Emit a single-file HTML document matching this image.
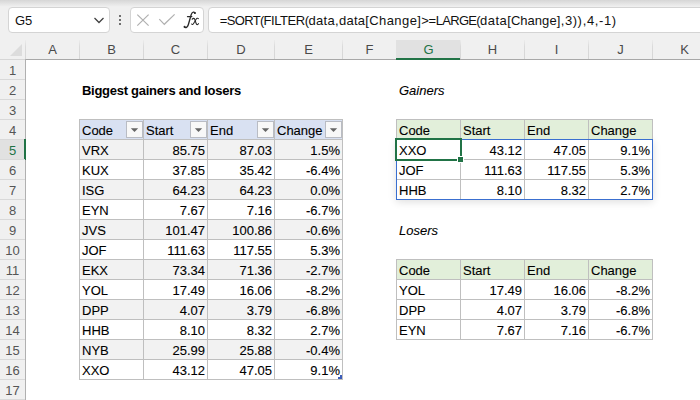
<!DOCTYPE html><html><head><meta charset="utf-8"><style>
*{box-sizing:border-box;margin:0;padding:0}
html,body{width:700px;height:400px;overflow:hidden;background:#fff}
body{position:relative;font-family:"Liberation Sans",sans-serif;font-size:13px;color:#000}
.a{position:absolute}
.t{position:absolute;white-space:nowrap;line-height:20px;height:20px}
.r{text-align:right}
.c{text-align:center}
.k{-webkit-text-stroke:0.1px #000}
</style></head><body>

<div class="a" style="left:0;top:0;width:700px;height:59px;background:#f0f0f0"></div>
<div class="a" style="left:0;top:0;width:700px;height:7px;background:linear-gradient(#d6d6d6,#f1f1f1)"></div>
<div class="a" style="left:8px;top:7px;width:102px;height:26px;background:#fff;border:1px solid #d4d4d4;border-radius:4px"></div>
<div class="t" style="left:15px;top:11px;font-size:13px;color:#111">G5</div>
<svg class="a" style="left:90px;top:14px" width="18" height="12"><path d="M4.5 4 L9 8.5 L13.5 4" fill="none" stroke="#404040" stroke-width="1.25"/></svg>
<div class="a" style="left:119px;top:15px;width:2px;height:2px;background:#707070"></div>
<div class="a" style="left:119px;top:19px;width:2px;height:2px;background:#707070"></div>
<div class="a" style="left:119px;top:23px;width:2px;height:2px;background:#707070"></div>
<div class="a" style="left:130px;top:7px;width:74px;height:26px;background:#fff;border:1px solid #d4d4d4;border-radius:4px"></div>
<svg class="a" style="left:134px;top:11px" width="70" height="20"><path d="M3.3 3.6 L14.6 14.6 M14.6 3.6 L3.3 14.6" stroke="#b0b0b0" stroke-width="1.2" fill="none"/><path d="M25.3 8.2 L30.3 13.3 L40.6 3.4" stroke="#b0b0b0" stroke-width="1.2" fill="none"/></svg>
<svg class="a" style="left:180px;top:8px" width="22" height="24"><g fill="none" stroke="#2a2a2a" stroke-linecap="round"><path d="M15 5.2 C14.6 3.6 12.2 3.6 11.2 6.6 L8.3 16.8 C7.6 19.4 5.6 20.2 4.4 19.0" stroke-width="1.35"/><path d="M7.4 8.6 L11.9 8.6" stroke-width="1.1"/><path d="M12.2 11.2 C13.1 9.9 14.4 10.0 14.9 11.6 L16.1 15.4 C16.6 16.9 17.7 16.9 18.5 15.7" stroke-width="1.15"/><path d="M18.4 10.6 C17.6 9.9 16.7 10.3 16.0 11.5 L13.9 15.1 C13.1 16.6 12.2 16.8 11.6 16.0" stroke-width="1.05"/></g><circle cx="14.9" cy="5" r="1" fill="#2a2a2a"/><circle cx="4.6" cy="18.8" r="1" fill="#2a2a2a"/></svg>
<div class="a" style="left:208px;top:7px;width:520px;height:26px;background:#fff;border:1px solid #d4d4d4;border-radius:4px"></div>
<div class="t" style="left:219.80px;top:10.5px;font-size:13px;letter-spacing:-0.666px;color:#111">=SORT(</div>
<div class="t" style="left:263.60px;top:10.5px;font-size:13px;letter-spacing:-0.449px;color:#111">FILTER(</div>
<div class="t" style="left:308.60px;top:10.5px;font-size:13px;letter-spacing:0.274px;color:#111">data,data</div>
<div class="t" style="left:365.30px;top:10.5px;font-size:13px;letter-spacing:0.402px;color:#111">[Change]</div>
<div class="t" style="left:421.30px;top:10.5px;font-size:13px;letter-spacing:-0.394px;color:#111">&gt;=</div>
<div class="t" style="left:435.70px;top:10.5px;font-size:13px;letter-spacing:-0.684px;color:#111">LARGE(</div>
<div class="t" style="left:480.00px;top:10.5px;font-size:13px;letter-spacing:0.497px;color:#111">data</div>
<div class="t" style="left:507.30px;top:10.5px;font-size:13px;letter-spacing:0.027px;color:#111">[Change]</div>
<div class="t" style="left:560.80px;top:10.5px;font-size:13px;letter-spacing:0.500px;color:#111">,3))</div>
<div class="t" style="left:582.80px;top:10.5px;font-size:13px;letter-spacing:0.609px;color:#111">,4,-1)</div>
<div class="a" style="left:25px;top:59px;width:675px;height:1px;background:#a8a8a8"></div>
<div class="a" style="left:0;top:59px;width:25px;height:1px;background:#d6d6d6"></div>
<svg class="a" style="left:0;top:40px" width="25" height="19"><path d="M22 4 L22 16 L10 16 Z" fill="#dcdcdc"/></svg>
<div class="t c" style="left:26px;top:40px;width:53px;line-height:20px;color:#4a4a4a">A</div>
<div class="a" style="left:79px;top:40px;width:1px;height:19px;background:linear-gradient(#ececec,#dadada 35%,#d6d6d6)"></div>
<div class="t c" style="left:80px;top:40px;width:63px;line-height:20px;color:#4a4a4a">B</div>
<div class="a" style="left:143px;top:40px;width:1px;height:19px;background:linear-gradient(#ececec,#dadada 35%,#d6d6d6)"></div>
<div class="t c" style="left:144px;top:40px;width:63px;line-height:20px;color:#4a4a4a">C</div>
<div class="a" style="left:207px;top:40px;width:1px;height:19px;background:linear-gradient(#ececec,#dadada 35%,#d6d6d6)"></div>
<div class="t c" style="left:208px;top:40px;width:66px;line-height:20px;color:#4a4a4a">D</div>
<div class="a" style="left:274px;top:40px;width:1px;height:19px;background:linear-gradient(#ececec,#dadada 35%,#d6d6d6)"></div>
<div class="t c" style="left:275px;top:40px;width:67px;line-height:20px;color:#4a4a4a">E</div>
<div class="a" style="left:342px;top:40px;width:1px;height:19px;background:linear-gradient(#ececec,#dadada 35%,#d6d6d6)"></div>
<div class="t c" style="left:343px;top:40px;width:53px;line-height:20px;color:#4a4a4a">F</div>
<div class="a" style="left:396px;top:40px;width:1px;height:19px;background:linear-gradient(#ececec,#dadada 35%,#d6d6d6)"></div>
<div class="a" style="left:396px;top:40px;width:64px;height:19px;background:#e1e1e1"></div>
<div class="a" style="left:396px;top:58px;width:64px;height:2px;background:#217346;z-index:2"></div>
<div class="t c" style="left:397px;top:40px;width:63px;line-height:20px;color:#217346">G</div>
<div class="a" style="left:460px;top:40px;width:1px;height:19px;background:linear-gradient(#ececec,#dadada 35%,#d6d6d6)"></div>
<div class="t c" style="left:461px;top:40px;width:63px;line-height:20px;color:#4a4a4a">H</div>
<div class="a" style="left:524px;top:40px;width:1px;height:19px;background:linear-gradient(#ececec,#dadada 35%,#d6d6d6)"></div>
<div class="t c" style="left:525px;top:40px;width:63px;line-height:20px;color:#4a4a4a">I</div>
<div class="a" style="left:588px;top:40px;width:1px;height:19px;background:linear-gradient(#ececec,#dadada 35%,#d6d6d6)"></div>
<div class="t c" style="left:589px;top:40px;width:63px;line-height:20px;color:#4a4a4a">J</div>
<div class="a" style="left:652px;top:40px;width:1px;height:19px;background:linear-gradient(#ececec,#dadada 35%,#d6d6d6)"></div>
<div class="t c" style="left:653px;top:40px;width:63px;line-height:20px;color:#4a4a4a">K</div>
<div class="a" style="left:716px;top:40px;width:1px;height:19px;background:linear-gradient(#ececec,#dadada 35%,#d6d6d6)"></div>
<div class="a" style="left:25px;top:40px;width:1px;height:19px;background:linear-gradient(#ececec,#dadada 35%,#d6d6d6)"></div>
<div class="a" style="left:0;top:60px;width:25px;height:340px;background:#f0f0f0"></div>
<div class="a" style="left:25px;top:59px;width:1px;height:341px;background:#b0b0b0"></div>
<div class="t c" style="left:0;top:61px;width:25px;color:#555">1</div>
<div class="a" style="left:0;top:79px;width:25px;height:1px;background:#d9d9d9"></div>
<div class="t c" style="left:0;top:81px;width:25px;color:#555">2</div>
<div class="a" style="left:0;top:99px;width:25px;height:1px;background:#d9d9d9"></div>
<div class="t c" style="left:0;top:101px;width:25px;color:#555">3</div>
<div class="a" style="left:0;top:119px;width:25px;height:1px;background:#d9d9d9"></div>
<div class="t c" style="left:0;top:121px;width:25px;color:#555">4</div>
<div class="a" style="left:0;top:139px;width:25px;height:1px;background:#d9d9d9"></div>
<div class="a" style="left:0;top:140px;width:25px;height:19px;background:#e1e1e1"></div>
<div class="a" style="left:24px;top:139px;width:2px;height:21px;background:#217346"></div>
<div class="t c" style="left:0;top:141px;width:25px;color:#217346">5</div>
<div class="a" style="left:0;top:159px;width:25px;height:1px;background:#d9d9d9"></div>
<div class="t c" style="left:0;top:161px;width:25px;color:#555">6</div>
<div class="a" style="left:0;top:179px;width:25px;height:1px;background:#d9d9d9"></div>
<div class="t c" style="left:0;top:181px;width:25px;color:#555">7</div>
<div class="a" style="left:0;top:199px;width:25px;height:1px;background:#d9d9d9"></div>
<div class="t c" style="left:0;top:201px;width:25px;color:#555">8</div>
<div class="a" style="left:0;top:219px;width:25px;height:1px;background:#d9d9d9"></div>
<div class="t c" style="left:0;top:221px;width:25px;color:#555">9</div>
<div class="a" style="left:0;top:239px;width:25px;height:1px;background:#d9d9d9"></div>
<div class="t c" style="left:0;top:241px;width:25px;color:#555">10</div>
<div class="a" style="left:0;top:259px;width:25px;height:1px;background:#d9d9d9"></div>
<div class="t c" style="left:0;top:261px;width:25px;color:#555">11</div>
<div class="a" style="left:0;top:279px;width:25px;height:1px;background:#d9d9d9"></div>
<div class="t c" style="left:0;top:281px;width:25px;color:#555">12</div>
<div class="a" style="left:0;top:299px;width:25px;height:1px;background:#d9d9d9"></div>
<div class="t c" style="left:0;top:301px;width:25px;color:#555">13</div>
<div class="a" style="left:0;top:319px;width:25px;height:1px;background:#d9d9d9"></div>
<div class="t c" style="left:0;top:321px;width:25px;color:#555">14</div>
<div class="a" style="left:0;top:339px;width:25px;height:1px;background:#d9d9d9"></div>
<div class="t c" style="left:0;top:341px;width:25px;color:#555">15</div>
<div class="a" style="left:0;top:359px;width:25px;height:1px;background:#d9d9d9"></div>
<div class="t c" style="left:0;top:361px;width:25px;color:#555">16</div>
<div class="a" style="left:0;top:379px;width:25px;height:1px;background:#d9d9d9"></div>
<div class="t c" style="left:0;top:381px;width:25px;color:#555">17</div>
<div class="a" style="left:0;top:399px;width:25px;height:1px;background:#d9d9d9"></div>
<div class="t" style="left:82px;top:81px;font-weight:bold;letter-spacing:-0.28px;">Biggest gainers and losers</div>
<div class="a" style="left:80px;top:120px;width:262px;height:19px;background:#d9e1f2"></div>
<div class="a" style="left:80px;top:140px;width:262px;height:19px;background:#f2f2f2"></div>
<div class="a" style="left:80px;top:180px;width:262px;height:19px;background:#f2f2f2"></div>
<div class="a" style="left:80px;top:220px;width:262px;height:19px;background:#f2f2f2"></div>
<div class="a" style="left:80px;top:260px;width:262px;height:19px;background:#f2f2f2"></div>
<div class="a" style="left:80px;top:300px;width:262px;height:19px;background:#f2f2f2"></div>
<div class="a" style="left:80px;top:340px;width:262px;height:19px;background:#f2f2f2"></div>
<div class="a" style="left:79px;top:119px;width:264px;height:1px;background:#bfbfbf"></div>
<div class="a" style="left:79px;top:139px;width:264px;height:1px;background:#bfbfbf"></div>
<div class="a" style="left:79px;top:159px;width:264px;height:1px;background:#bfbfbf"></div>
<div class="a" style="left:79px;top:179px;width:264px;height:1px;background:#bfbfbf"></div>
<div class="a" style="left:79px;top:199px;width:264px;height:1px;background:#bfbfbf"></div>
<div class="a" style="left:79px;top:219px;width:264px;height:1px;background:#bfbfbf"></div>
<div class="a" style="left:79px;top:239px;width:264px;height:1px;background:#bfbfbf"></div>
<div class="a" style="left:79px;top:259px;width:264px;height:1px;background:#bfbfbf"></div>
<div class="a" style="left:79px;top:279px;width:264px;height:1px;background:#bfbfbf"></div>
<div class="a" style="left:79px;top:299px;width:264px;height:1px;background:#bfbfbf"></div>
<div class="a" style="left:79px;top:319px;width:264px;height:1px;background:#bfbfbf"></div>
<div class="a" style="left:79px;top:339px;width:264px;height:1px;background:#bfbfbf"></div>
<div class="a" style="left:79px;top:359px;width:264px;height:1px;background:#bfbfbf"></div>
<div class="a" style="left:79px;top:379px;width:264px;height:1px;background:#bfbfbf"></div>
<div class="a" style="left:79px;top:119px;width:1px;height:261px;background:#bfbfbf"></div>
<div class="a" style="left:143px;top:119px;width:1px;height:261px;background:#bfbfbf"></div>
<div class="a" style="left:207px;top:119px;width:1px;height:261px;background:#bfbfbf"></div>
<div class="a" style="left:274px;top:119px;width:1px;height:261px;background:#bfbfbf"></div>
<div class="a" style="left:342px;top:119px;width:1px;height:261px;background:#bfbfbf"></div>
<div class="t k" style="left:82px;top:121px;">Code</div>
<div class="a" style="left:126px;top:121px;width:17px;height:17px;background:#f8f8f8;border:1px solid #b9bcc4"></div>
<svg class="a" style="left:126px;top:121px" width="17" height="17"><path d="M4.8 7.2 L12.2 7.2 L8.5 11 Z" fill="#666"/></svg>
<div class="t k" style="left:146px;top:121px;">Start</div>
<div class="a" style="left:190px;top:121px;width:17px;height:17px;background:#f8f8f8;border:1px solid #b9bcc4"></div>
<svg class="a" style="left:190px;top:121px" width="17" height="17"><path d="M4.8 7.2 L12.2 7.2 L8.5 11 Z" fill="#666"/></svg>
<div class="t k" style="left:210px;top:121px;">End</div>
<div class="a" style="left:257px;top:121px;width:17px;height:17px;background:#f8f8f8;border:1px solid #b9bcc4"></div>
<svg class="a" style="left:257px;top:121px" width="17" height="17"><path d="M4.8 7.2 L12.2 7.2 L8.5 11 Z" fill="#666"/></svg>
<div class="t k" style="left:277px;top:121px;">Change</div>
<div class="a" style="left:325px;top:121px;width:17px;height:17px;background:#f8f8f8;border:1px solid #b9bcc4"></div>
<svg class="a" style="left:325px;top:121px" width="17" height="17"><path d="M4.8 7.2 L12.2 7.2 L8.5 11 Z" fill="#666"/></svg>
<div class="t k" style="left:82px;top:141px;">VRX</div>
<div class="t r k" style="left:144px;top:141px;width:61px;">85.75</div>
<div class="t r k" style="left:208px;top:141px;width:64px;">87.03</div>
<div class="t r k" style="left:275px;top:141px;width:65px;">1.5%</div>
<div class="t k" style="left:82px;top:161px;">KUX</div>
<div class="t r k" style="left:144px;top:161px;width:61px;">37.85</div>
<div class="t r k" style="left:208px;top:161px;width:64px;">35.42</div>
<div class="t r k" style="left:275px;top:161px;width:65px;">-6.4%</div>
<div class="t k" style="left:82px;top:181px;">ISG</div>
<div class="t r k" style="left:144px;top:181px;width:61px;">64.23</div>
<div class="t r k" style="left:208px;top:181px;width:64px;">64.23</div>
<div class="t r k" style="left:275px;top:181px;width:65px;">0.0%</div>
<div class="t k" style="left:82px;top:201px;">EYN</div>
<div class="t r k" style="left:144px;top:201px;width:61px;">7.67</div>
<div class="t r k" style="left:208px;top:201px;width:64px;">7.16</div>
<div class="t r k" style="left:275px;top:201px;width:65px;">-6.7%</div>
<div class="t k" style="left:82px;top:221px;">JVS</div>
<div class="t r k" style="left:144px;top:221px;width:61px;">101.47</div>
<div class="t r k" style="left:208px;top:221px;width:64px;">100.86</div>
<div class="t r k" style="left:275px;top:221px;width:65px;">-0.6%</div>
<div class="t k" style="left:82px;top:241px;">JOF</div>
<div class="t r k" style="left:144px;top:241px;width:61px;">111.63</div>
<div class="t r k" style="left:208px;top:241px;width:64px;">117.55</div>
<div class="t r k" style="left:275px;top:241px;width:65px;">5.3%</div>
<div class="t k" style="left:82px;top:261px;">EKX</div>
<div class="t r k" style="left:144px;top:261px;width:61px;">73.34</div>
<div class="t r k" style="left:208px;top:261px;width:64px;">71.36</div>
<div class="t r k" style="left:275px;top:261px;width:65px;">-2.7%</div>
<div class="t k" style="left:82px;top:281px;">YOL</div>
<div class="t r k" style="left:144px;top:281px;width:61px;">17.49</div>
<div class="t r k" style="left:208px;top:281px;width:64px;">16.06</div>
<div class="t r k" style="left:275px;top:281px;width:65px;">-8.2%</div>
<div class="t k" style="left:82px;top:301px;">DPP</div>
<div class="t r k" style="left:144px;top:301px;width:61px;">4.07</div>
<div class="t r k" style="left:208px;top:301px;width:64px;">3.79</div>
<div class="t r k" style="left:275px;top:301px;width:65px;">-6.8%</div>
<div class="t k" style="left:82px;top:321px;">HHB</div>
<div class="t r k" style="left:144px;top:321px;width:61px;">8.10</div>
<div class="t r k" style="left:208px;top:321px;width:64px;">8.32</div>
<div class="t r k" style="left:275px;top:321px;width:65px;">2.7%</div>
<div class="t k" style="left:82px;top:341px;">NYB</div>
<div class="t r k" style="left:144px;top:341px;width:61px;">25.99</div>
<div class="t r k" style="left:208px;top:341px;width:64px;">25.88</div>
<div class="t r k" style="left:275px;top:341px;width:65px;">-0.4%</div>
<div class="t k" style="left:82px;top:361px;">XXO</div>
<div class="t r k" style="left:144px;top:361px;width:61px;">43.12</div>
<div class="t r k" style="left:208px;top:361px;width:64px;">47.05</div>
<div class="t r k" style="left:275px;top:361px;width:65px;">9.1%</div>
<div class="a" style="left:340px;top:375px;width:2px;height:2px;background:#3b5cb8"></div><div class="a" style="left:338px;top:377px;width:4px;height:2px;background:#3b5cb8"></div>
<div class="t k" style="left:399px;top:81px;font-style:italic;">Gainers</div>
<div class="t k" style="left:399px;top:221px;font-style:italic;">Losers</div>
<div class="a" style="left:396px;top:139px;width:257px;height:61px;box-shadow:0 2px 8px rgba(0,0,0,0.13)"></div>
<div class="a" style="left:397px;top:120px;width:255px;height:19px;background:#e2efda"></div>
<div class="a" style="left:396px;top:119px;width:257px;height:1px;background:#bfbfbf"></div>
<div class="a" style="left:396px;top:139px;width:257px;height:1px;background:#bfbfbf"></div>
<div class="a" style="left:396px;top:159px;width:257px;height:1px;background:#bfbfbf"></div>
<div class="a" style="left:396px;top:179px;width:257px;height:1px;background:#bfbfbf"></div>
<div class="a" style="left:396px;top:199px;width:257px;height:1px;background:#bfbfbf"></div>
<div class="a" style="left:396px;top:119px;width:1px;height:81px;background:#bfbfbf"></div>
<div class="a" style="left:460px;top:119px;width:1px;height:81px;background:#bfbfbf"></div>
<div class="a" style="left:524px;top:119px;width:1px;height:81px;background:#bfbfbf"></div>
<div class="a" style="left:588px;top:119px;width:1px;height:81px;background:#bfbfbf"></div>
<div class="a" style="left:652px;top:119px;width:1px;height:81px;background:#bfbfbf"></div>
<div class="t k" style="left:399px;top:121px;">Code</div>
<div class="t k" style="left:463px;top:121px;">Start</div>
<div class="t k" style="left:527px;top:121px;">End</div>
<div class="t k" style="left:591px;top:121px;">Change</div>
<div class="t k" style="left:399px;top:141px;">XXO</div>
<div class="t r k" style="left:461px;top:141px;width:61px;">43.12</div>
<div class="t r k" style="left:525px;top:141px;width:61px;">47.05</div>
<div class="t r k" style="left:589px;top:141px;width:61px;">9.1%</div>
<div class="t k" style="left:399px;top:161px;">JOF</div>
<div class="t r k" style="left:461px;top:161px;width:61px;">111.63</div>
<div class="t r k" style="left:525px;top:161px;width:61px;">117.55</div>
<div class="t r k" style="left:589px;top:161px;width:61px;">5.3%</div>
<div class="t k" style="left:399px;top:181px;">HHB</div>
<div class="t r k" style="left:461px;top:181px;width:61px;">8.10</div>
<div class="t r k" style="left:525px;top:181px;width:61px;">8.32</div>
<div class="t r k" style="left:589px;top:181px;width:61px;">2.7%</div>
<div class="a" style="left:397px;top:260px;width:255px;height:19px;background:#e2efda"></div>
<div class="a" style="left:396px;top:259px;width:257px;height:1px;background:#bfbfbf"></div>
<div class="a" style="left:396px;top:279px;width:257px;height:1px;background:#bfbfbf"></div>
<div class="a" style="left:396px;top:299px;width:257px;height:1px;background:#bfbfbf"></div>
<div class="a" style="left:396px;top:319px;width:257px;height:1px;background:#bfbfbf"></div>
<div class="a" style="left:396px;top:339px;width:257px;height:1px;background:#bfbfbf"></div>
<div class="a" style="left:396px;top:259px;width:1px;height:81px;background:#bfbfbf"></div>
<div class="a" style="left:460px;top:259px;width:1px;height:81px;background:#bfbfbf"></div>
<div class="a" style="left:524px;top:259px;width:1px;height:81px;background:#bfbfbf"></div>
<div class="a" style="left:588px;top:259px;width:1px;height:81px;background:#bfbfbf"></div>
<div class="a" style="left:652px;top:259px;width:1px;height:81px;background:#bfbfbf"></div>
<div class="t k" style="left:399px;top:261px;">Code</div>
<div class="t k" style="left:463px;top:261px;">Start</div>
<div class="t k" style="left:527px;top:261px;">End</div>
<div class="t k" style="left:591px;top:261px;">Change</div>
<div class="t k" style="left:399px;top:281px;">YOL</div>
<div class="t r k" style="left:461px;top:281px;width:61px;">17.49</div>
<div class="t r k" style="left:525px;top:281px;width:61px;">16.06</div>
<div class="t r k" style="left:589px;top:281px;width:61px;">-8.2%</div>
<div class="t k" style="left:399px;top:301px;">DPP</div>
<div class="t r k" style="left:461px;top:301px;width:61px;">4.07</div>
<div class="t r k" style="left:525px;top:301px;width:61px;">3.79</div>
<div class="t r k" style="left:589px;top:301px;width:61px;">-6.8%</div>
<div class="t k" style="left:399px;top:321px;">EYN</div>
<div class="t r k" style="left:461px;top:321px;width:61px;">7.67</div>
<div class="t r k" style="left:525px;top:321px;width:61px;">7.16</div>
<div class="t r k" style="left:589px;top:321px;width:61px;">-6.7%</div>
<div class="a" style="left:396px;top:139px;width:257px;height:61px;border:1px solid #3a6fd0"></div>
<div class="a" style="left:395px;top:138px;width:67px;height:23px;border:2px solid #217346"></div>
<div class="a" style="left:457px;top:156px;width:7px;height:7px;background:#fff"></div>
<div class="a" style="left:458px;top:157px;width:5px;height:5px;background:#217346"></div>
</body></html>
